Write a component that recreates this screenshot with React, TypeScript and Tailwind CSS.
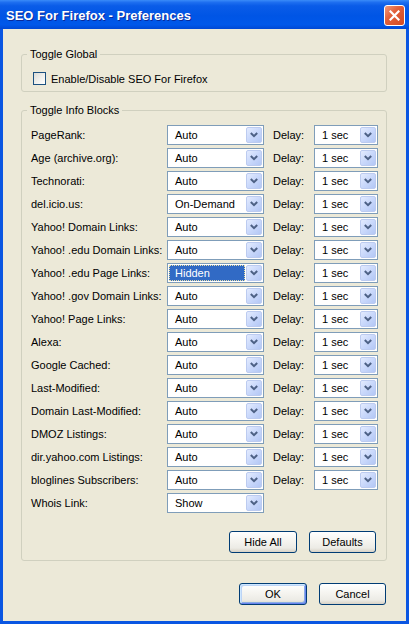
import React from "react";

const rows: { label: string; value: string; delay: boolean; selected?: boolean }[] = [
  { label: "PageRank:", value: "Auto", delay: true },
  { label: "Age (archive.org):", value: "Auto", delay: true },
  { label: "Technorati:", value: "Auto", delay: true },
  { label: "del.icio.us:", value: "On-Demand", delay: true },
  { label: "Yahoo! Domain Links:", value: "Auto", delay: true },
  { label: "Yahoo! .edu Domain Links:", value: "Auto", delay: true },
  { label: "Yahoo! .edu Page Links:", value: "Hidden", delay: true, selected: true },
  { label: "Yahoo! .gov Domain Links:", value: "Auto", delay: true },
  { label: "Yahoo! Page Links:", value: "Auto", delay: true },
  { label: "Alexa:", value: "Auto", delay: true },
  { label: "Google Cached:", value: "Auto", delay: true },
  { label: "Last-Modified:", value: "Auto", delay: true },
  { label: "Domain Last-Modified:", value: "Auto", delay: true },
  { label: "DMOZ Listings:", value: "Auto", delay: true },
  { label: "dir.yahoo.com Listings:", value: "Auto", delay: true },
  { label: "bloglines Subscribers:", value: "Auto", delay: true },
  { label: "Whois Link:", value: "Show", delay: false },
];

function Combo({ value, wide, selected }: { value: string; wide: boolean; selected?: boolean }) {
  return (
    <div
      className={
        "flex h-[20px] items-center border border-[#7F9DB9] bg-white " + (wide ? "w-[97px]" : "w-[64px]")
      }
    >
      <div
        className={
          "ml-[1px] flex h-[16px] flex-1 items-center border pl-[5px] " +
          (selected
            ? "border-dotted border-[#E9DFA6] bg-[#316AC5] text-white"
            : "border-transparent")
        }
      >
        {value}
      </div>
      <div className="ml-[1px] mr-[1px] flex h-[16px] w-[16px] items-center justify-center rounded-[2px] border border-[#BCCBF0] bg-[linear-gradient(135deg,#E3EBFE_0%,#C9D8FB_50%,#B3C7F5_100%)]">
        <svg width="8" height="6" viewBox="0 0 8 6">
          <path d="M0.8 1 L4 4.2 L7.2 1" fill="none" stroke="#4D6185" strokeWidth="2" />
        </svg>
      </div>
    </div>
  );
}

function XPButton({ children, w, isDefault }: { children: React.ReactNode; w: string; isDefault?: boolean }) {
  return (
    <div
      className={
        "flex h-[22px] items-center justify-center rounded-[3px] border border-[#003C74] bg-[linear-gradient(to_bottom,#FFFFFF_0%,#F4F3EE_50%,#ECEBE5_80%,#D8D2C6_100%)] " +
        w +
        (isDefault
          ? " shadow-[inset_1px_1px_0_#CEE7FF,inset_-1px_-1px_0_#6982EE,inset_2px_2px_0_#BCD4F6,inset_-2px_-2px_0_#89ADE4]"
          : "")
      }
    >
      {children}
    </div>
  );
}

export default function App() {
  return (
    <div className="flex h-[624px] w-[409px] flex-col font-['Liberation_Sans',Arial,sans-serif] text-[11px] leading-[14px] text-black">
      {/* Title bar */}
      <div className="flex h-[29px] shrink-0 items-start justify-between bg-[linear-gradient(to_bottom,#3A8CF8_0%,#1E6FF0_8%,#0A5CE8_20%,#0055E5_55%,#0058EA_85%,#0048D4_100%)]">
        <div className="pl-[6px] pt-[8px] text-[13px] font-bold leading-[16px] text-white [text-shadow:1px_1px_#0A2A9A]">
          SEO For Firefox - Preferences
        </div>
        <div className="mr-[4px] mt-[5px] flex h-[21px] w-[21px] items-center justify-center rounded-[3px] border border-white bg-[linear-gradient(135deg,#F09A7C_0%,#E2603B_40%,#D24A22_100%)]">
          <svg width="11" height="11" viewBox="0 0 11 11">
            <path d="M1.5 1.5 L9.5 9.5 M9.5 1.5 L1.5 9.5" stroke="white" strokeWidth="2.2" strokeLinecap="square" />
          </svg>
        </div>
      </div>

      {/* Body */}
      <div className="flex flex-1 flex-col border-x-[3px] border-b-[3px] border-[#0A56E2] bg-[#ECE9D8]">
        <fieldset className="ml-[18px] mt-[18px] w-[366px] rounded-[3px] border border-[#D0D0BF] p-0">
          <legend className="ml-[5px] px-[3px] leading-[14px]">Toggle Global</legend>
          <div className="flex h-[13px] items-center pl-[11px] mt-[11px] mb-[6px]">
            <div className="h-[13px] w-[13px] border border-[#1C5180] bg-[linear-gradient(135deg,#DCDCD7_0%,#F2F2EF_60%,#FFFFFF_100%)]" />
            <span className="ml-[5px]">Enable/Disable SEO For Firefox</span>
          </div>
        </fieldset>

        <fieldset className="ml-[18px] mt-[11px] w-[366px] rounded-[3px] border border-[#D0D0BF] p-0">
          <legend className="ml-[5px] px-[3px] leading-[14px]">Toggle Info Blocks</legend>
          <div className="flex flex-col gap-[3px] pl-[9px] pt-[8px]">
            {rows.map((r) => (
              <div key={r.label} className="flex h-[20px] items-center">
                <div className="w-[136px]">{r.label}</div>
                <Combo value={r.value} wide selected={r.selected} />
                {r.delay && (
                  <>
                    <div className="ml-[9px] w-[41px]">Delay:</div>
                    <Combo value="1 sec" wide={false} />
                  </>
                )}
              </div>
            ))}
          </div>
          <div className="mt-[18px] mb-[7px] flex justify-end gap-[12px] pr-[10px]">
            <XPButton w="w-[68px]">Hide All</XPButton>
            <XPButton w="w-[67px]">Defaults</XPButton>
          </div>
        </fieldset>

        <div className="mr-[20px] mt-[22px] flex justify-end gap-[12px]">
          <XPButton w="w-[68px]" isDefault>
            OK
          </XPButton>
          <XPButton w="w-[67px]">Cancel</XPButton>
        </div>
      </div>
    </div>
  );
}
